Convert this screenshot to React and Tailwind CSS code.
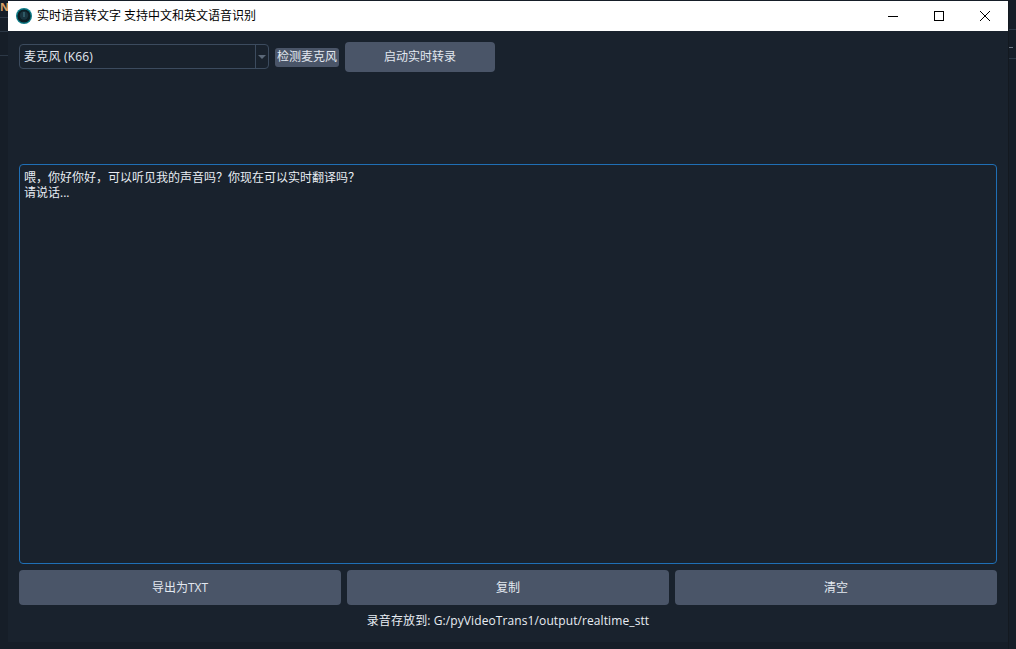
const FONT = "font-['Open_Sans','Noto_Sans_CJK_SC',sans-serif]"

const ACTIONS = ['导出为TXT', '复制', '清空']

function AppIcon() {
  return (
    <svg width="16" height="16" viewBox="0 0 16 16" className="shrink-0">
      <circle cx="8" cy="8" r="8" fill="#0b7a86" />
      <circle cx="8" cy="8" r="6.6" fill="#0c1f26" />
      <circle cx="8" cy="7.5" r="4.2" fill="#1a3540" />
      <rect x="7" y="4" width="2" height="5" fill="#2f5a66" />
    </svg>
  )
}

function TitleBar() {
  return (
    <div className="flex h-[30px] items-center bg-white pl-2 text-black">
      <AppIcon />
      <span className="ml-[5px] text-xs">实时语音转文字 支持中文和英文语音识别</span>
      <div className="ml-auto flex h-full">
        <div className="flex w-[46px] items-center justify-center">
          <svg width="10" height="10" viewBox="0 0 10 10">
            <path d="M0 5.5H10" stroke="#000" fill="none" />
          </svg>
        </div>
        <div className="flex w-[46px] items-center justify-center">
          <svg width="10" height="10" viewBox="0 0 10 10">
            <rect x="0.5" y="0.5" width="9" height="9" stroke="#000" fill="none" />
          </svg>
        </div>
        <div className="flex w-[46px] items-center justify-center">
          <svg width="10" height="10" viewBox="0 0 10 10">
            <path d="M0 0L10 10M10 0L0 10" stroke="#000" strokeWidth="1" fill="none" />
          </svg>
        </div>
      </div>
    </div>
  )
}

function Toolbar() {
  return (
    <div className="flex h-[30px] items-center">
      <div className="mb-px flex h-[25px] w-[250px] items-center rounded-[4px] border border-[#3c4b5e]">
        <span className="flex-1 pl-1 text-xs tracking-[0.2px] text-[#e2e8f0]">麦克风 (K66)</span>
        <div className="flex h-full w-[13px] items-center justify-center border-l border-[#3c4b5e]">
          <div className="h-0 w-0 border-x-[4px] border-t-[4px] border-x-transparent border-t-[#5b6878]" />
        </div>
      </div>
      <div className="ml-[6px] flex h-[19px] w-[64px] items-center justify-center rounded-[3px] bg-[#4a5568] text-xs text-[#e2e8f0]">
        检测麦克风
      </div>
      <div className="ml-[6px] flex h-[30px] w-[150px] items-center justify-center rounded-[4px] bg-[#4a5568] text-xs text-[#e2e8f0]">
        启动实时转录
      </div>
    </div>
  )
}

// slivers of the app behind the window, visible on either side
function BehindLeft() {
  return (
    <div className="w-2 shrink-0">
      <div className="h-[18px] overflow-hidden border-b border-[#2c3846] text-[11px] leading-[14px] font-bold text-[#d9a066]">N</div>
      <div className="h-[14px] border-b border-[#2c3846]" />
      <div className="h-6 border-b border-[#2c3846]" />
    </div>
  )
}

function BehindRight() {
  return (
    <div className="w-2 shrink-0 border-l border-[#131920]">
      <div className="h-[30px] border-b border-[#2c3846]" />
      <div className="mt-[17px] h-px w-1 bg-[#6b7480]" />
      <div className="h-[11px] border-b border-[#2c3846]" />
    </div>
  )
}

export default function App() {
  return (
    <div className={`flex h-[649px] w-[1016px] overflow-hidden bg-[#161e28] ${FONT}`}>
      <BehindLeft />
      <div className="mt-px flex h-[641px] w-[1000px] flex-col bg-[#19222d]">
        <TitleBar />
        <div className="flex flex-1 flex-col px-[11px] pt-[11px]">
          <Toolbar />
          <div className="mt-[92px] h-[400px] rounded-[4px] border border-[#1f6fb5] px-[4px] pt-[5px] text-xs leading-[15px] text-[#e8edf3]">
            <p>喂，你好你好，可以听见我的声音吗？你现在可以实时翻译吗？</p>
            <p>请说话...</p>
          </div>
          <div className="mt-[6px] flex gap-[6px]">
            {ACTIONS.map(label => (
              <div
                key={label}
                className="flex h-[35px] flex-1 items-center justify-center rounded-[4px] bg-[#4a5568] text-xs text-[#e2e8f0]"
              >
                {label}
              </div>
            ))}
          </div>
          <p className="mt-2 text-center text-xs leading-[15px] tracking-[0.1px] text-[#e8edf3]">
            录音存放到: G:/pyVideoTrans1/output/realtime_stt
          </p>
        </div>
      </div>
      <BehindRight />
    </div>
  )
}
